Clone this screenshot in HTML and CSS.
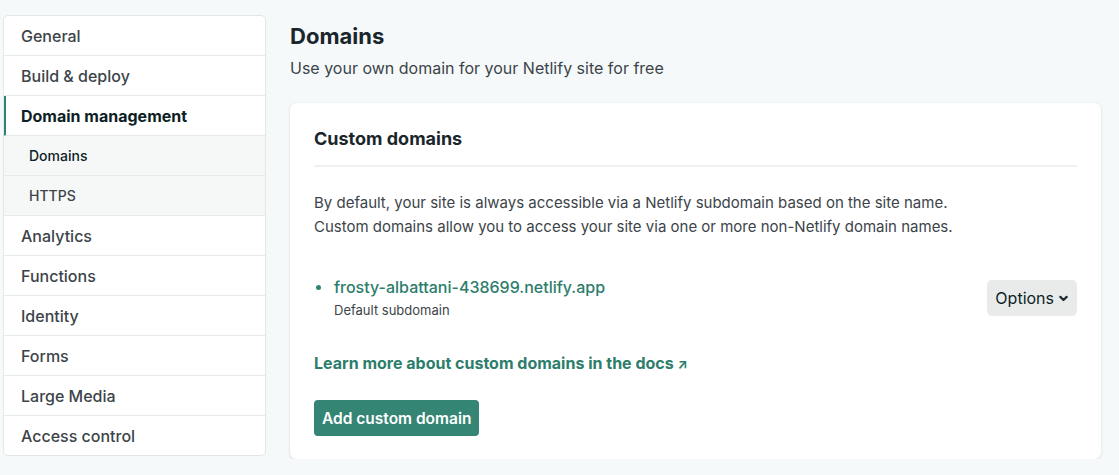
FILE: index.html
```html
<!DOCTYPE html>
<html lang="en">
<head>
<meta charset="utf-8">
<title>Domains</title>
<link rel="stylesheet" href="styles.css">
</head>
<body>
<div class="layout">
  <nav class="sidebar">
    <a class="nav-item">General</a>
    <a class="nav-item">Build &amp; deploy</a>
    <a class="nav-item active">Domain management</a>
    <a class="nav-item sub current">Domains</a>
    <a class="nav-item sub">HTTPS</a>
    <a class="nav-item">Analytics</a>
    <a class="nav-item">Functions</a>
    <a class="nav-item">Identity</a>
    <a class="nav-item">Forms</a>
    <a class="nav-item">Large Media</a>
    <a class="nav-item last">Access control</a>
  </nav>
  <main class="main">
    <h1 class="page-title">Domains</h1>
    <p class="page-sub">Use your own domain for your Netlify site for free</p>
    <section class="card">
      <h2 class="card-title">Custom domains</h2>
      <p class="card-text">By default, your site is always accessible via a Netlify subdomain based on the site name.<br>Custom domains allow you to access your site via one or more non-Netlify domain names.</p>
      <ul class="domain-list">
        <li class="domain-row">
          <div class="domain-info">
            <a class="domain-name">frosty-albattani-438699.netlify.app</a>
            <span class="domain-note">Default subdomain</span>
          </div>
          <button class="options-btn">Options <svg class="chev" viewBox="0 0 10 10" width="9" height="9"><path d="M1.5 3.2 L5 6.7 L8.5 3.2" fill="none" stroke="#1f2a30" stroke-width="2.4" stroke-linecap="round" stroke-linejoin="round"/></svg></button>
        </li>
      </ul>
      <a class="docs-link">Learn more about custom domains in the docs <span class="arrow">↗</span></a>
      <div class="actions"><button class="primary-btn">Add custom domain</button></div>
    </section>
  </main>
</div>
</body>
</html>
```

FILE: styles.css
```css
* { box-sizing: border-box; }
html, body { margin: 0; padding: 0; }
body {
  background: #f5f9f9;
  font-family: Inter, "Noto Sans", "Liberation Sans", sans-serif;
  color: #1f2a30;
  -webkit-font-smoothing: antialiased;
}
.layout {
  display: flex;
  align-items: flex-start;
  gap: 24px;
  padding: 15px 0 0 3px;
}
.sidebar {
  width: 263px;
  flex: none;
  background: #fff;
  border: 1px solid #e3e6e7;
  border-radius: 5px;
  display: flex;
  flex-direction: column;
  overflow: hidden;
}
.nav-item {
  display: flex;
  align-items: center;
  height: 40px;
  padding-left: 15px;
  font-size: 16px;
  font-weight: 500;
  color: #3c4449;
  border-bottom: 1px solid #e6e9ea;
  border-left: 3px solid transparent;
  margin-left: -1px;
}
.nav-item.last { border-bottom: 0; height: 39px; }
.nav-item.active {
  border-left-color: #2f8574;
  font-weight: 700;
  color: #0e1e25;
}
.nav-item.sub {
  background: #f6f8f8;
  padding-left: 23px;
  font-size: 14px;
  color: #3c4449;
}
.nav-item.sub.current { color: #0e1e25; }
.main {
  width: 811px;
  flex: none;
}
.page-title {
  margin: 6px 0 0;
  font-size: 22px;
  line-height: 30px;
  font-weight: 700;
  color: #1a262c;
}
.page-sub {
  margin: 5px 0 0;
  font-size: 16px;
  line-height: 24px;
  color: #3c4449;
}
.card {
  margin-top: 23px;
  background: #fff;
  border-radius: 6px;
  box-shadow: 0 1px 3px rgba(0, 30, 40, 0.12), 0 0 1px rgba(0, 30, 40, 0.1);
  padding: 24px 24px 23px;
}
.card-title {
  margin: 0;
  font-size: 18px;
  line-height: 24px;
  font-weight: 700;
  color: #1a262c;
  padding-bottom: 14px;
  border-bottom: 2px solid #eef1f1;
}
.card-text {
  margin: 24px 0 0;
  font-size: 15px;
  line-height: 24px;
  color: #3c4449;
}
.domain-list {
  list-style: none;
  margin: 36px 0 0;
  padding: 0;
}
.domain-row {
  display: flex;
  align-items: center;
  justify-content: space-between;
}
.domain-info {
  display: flex;
  flex-direction: column;
  padding-left: 20px;
  position: relative;
}
.domain-info::before {
  content: "";
  position: absolute;
  left: 2px;
  top: 10px;
  width: 5px;
  height: 5px;
  border-radius: 50%;
  background: #2f8574;
}
.domain-name {
  font-size: 16px;
  line-height: 24px;
  font-weight: 500;
  color: #2c7d6b;
}
.domain-note {
  font-size: 13px;
  line-height: 22px;
  color: #3c4449;
}
.options-btn {
  display: flex;
  align-items: center;
  gap: 5px;
  height: 36px;
  padding: 0 9px 0 8px;
  border: 0;
  border-radius: 5px;
  background: #e9ebeb;
  font-family: inherit;
  font-size: 16px;
  color: #0e1e25;
}
.docs-link {
  display: block;
  margin-top: 30px;
  font-size: 16px;
  line-height: 24px;
  font-weight: 700;
  color: #2c7d6b;
}
.arrow { font-size: 13px; font-weight: 700; }
.actions { margin-top: 24px; }
.primary-btn {
  height: 36px;
  padding: 0 8px;
  border: 0;
  border-radius: 4px;
  background: #348574;
  color: #fff;
  font-family: inherit;
  font-size: 15.5px;
  font-weight: 600;
}
```
